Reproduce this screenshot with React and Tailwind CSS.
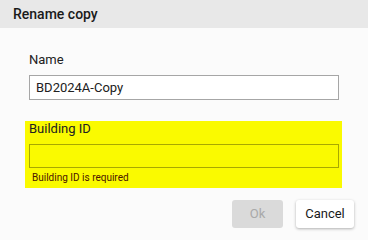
import React from "react";

export default function App() {
  return (
    <div className="w-[368px] h-[240px] bg-[#fbfbfb] flex flex-col font-['Roboto',sans-serif] text-[#212121]">
      {/* Title bar */}
      <div className="h-[28px] bg-[#e8e8e8] flex items-center pl-[13px]">
        <h2 className="text-[14px] leading-[16px] font-medium text-[#1a1a1a]">Rename copy</h2>
      </div>

      <div className="flex flex-col px-[25px] pt-[24px]">
        {/* Name field */}
        <div className="flex flex-col px-[4px]">
          <label className="text-[13px] leading-[16px]">Name</label>
          <input
            type="text"
            defaultValue="BD2024A-Copy"
            className="mt-[7px] h-[25px] w-[310px] border border-[#a6a6a6] bg-white px-[6px] text-[13px] text-[#212121] outline-none"
          />
        </div>

        {/* Building ID field (invalid) */}
        <div className="mt-[21px] bg-[#fafa00] w-[317px] flex flex-col px-[4px] pb-[4px]">
          <label className="text-[13px] leading-[16px]">Building ID</label>
          <input
            type="text"
            className="mt-[7px] h-[24px] w-[310px] border border-[#a8a800] bg-transparent px-[6px] text-[13px] outline-none"
          />
          <span className="mt-[4px] pl-[3px] text-[10px] leading-[12px] text-[#4a1500]">Building ID is required</span>
        </div>
      </div>

      {/* Actions */}
      <div className="flex justify-end gap-[13px] pr-[14px] mt-[12px]">
        <button
          disabled
          className="w-[51px] h-[28px] rounded-[3px] bg-[#dadada] text-[13px] text-[#a9a9a9]"
        >
          Ok
        </button>
        <button className="w-[58px] h-[28px] rounded-[3px] bg-white text-[13px] text-[#1a1a1a] shadow-[0_1px_3px_rgba(0,0,0,0.3)]">
          Cancel
        </button>
      </div>
    </div>
  );
}
